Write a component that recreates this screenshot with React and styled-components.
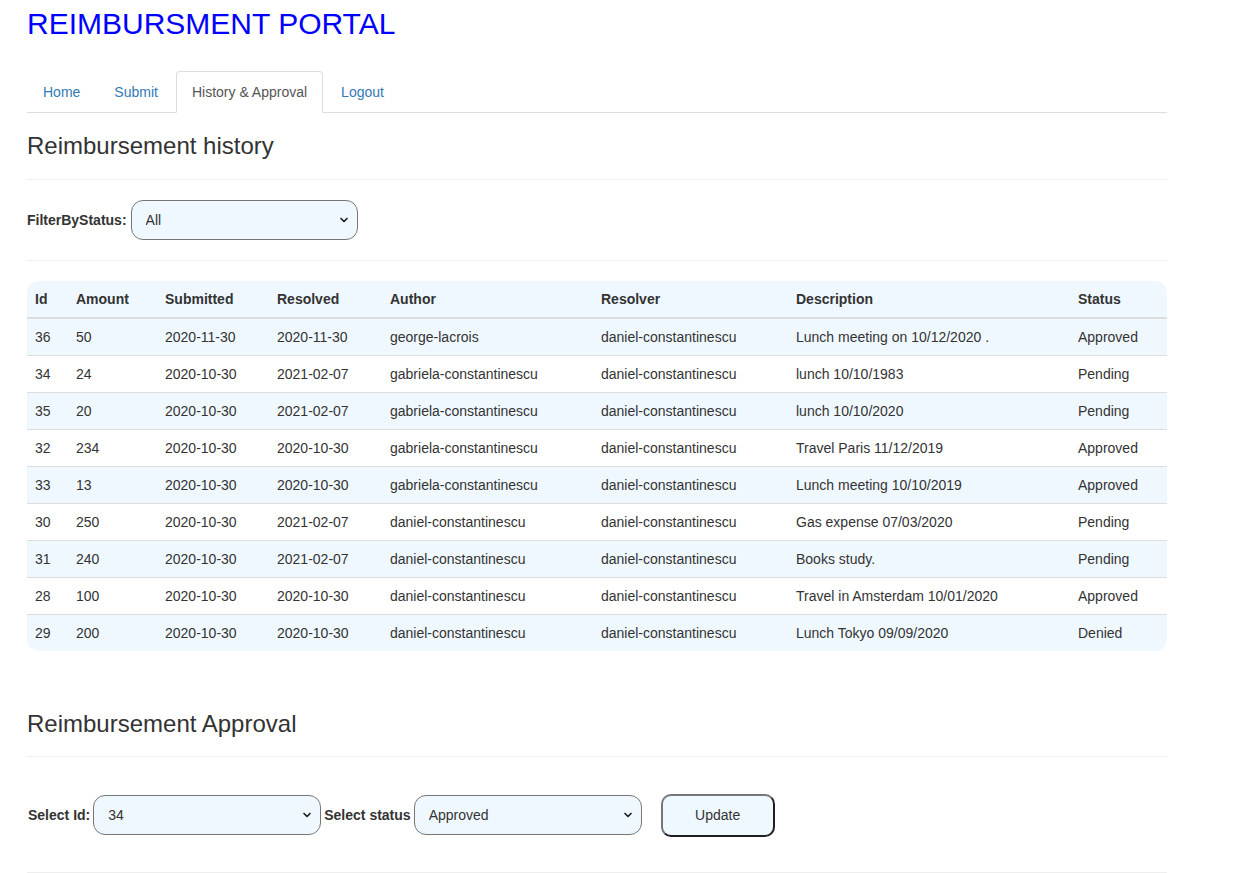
import React, { useState } from "react";
import styled, { createGlobalStyle } from "styled-components";
import { ChevronDown } from "lucide-react";

const GlobalStyle = createGlobalStyle`
  body {
    margin: 0;
    background: #fff;
    font-family: "Liberation Sans", Arial, sans-serif;
    font-size: 14px;
    line-height: 20px;
    color: #333;
  }
`;

const Page = styled.div`
  width: 1140px;
  margin-left: 27px;
`;

const Title = styled.h1`
  margin: 6px 0 0;
  font-size: 30px;
  line-height: 36px;
  font-weight: 400;
  color: #0000ff;
`;

const Tabs = styled.ul`
  display: flex;
  list-style: none;
  margin: 29px 0 0;
  padding: 0;
  border-bottom: 1px solid #ddd;
`;

const Tab = styled.li`
  margin-bottom: -1px;
  margin-right: 2px;
  padding: 10px 15px;
  line-height: 20px;
  border: 1px solid ${(p) => (p.$active ? "#ddd" : "transparent")};
  border-bottom-color: transparent;
  border-radius: 4px 4px 0 0;
  background: ${(p) => (p.$active ? "#fff" : "transparent")};
  color: ${(p) => (p.$active ? "#555" : "#337ab7")};
  cursor: pointer;
`;

const Heading = styled.h3`
  margin: ${(p) => p.$top || 20}px 0 0;
  font-size: 24px;
  line-height: 26.4px;
  font-weight: 400;
  color: #333;
`;

const Rule = styled.hr`
  margin: ${(p) => p.$top || 20}px 0 20px;
  border: 0;
  border-top: 1px solid #eee;
`;

const FormRow = styled.div`
  display: flex;
  align-items: center;
  gap: ${(p) => p.$gap || 4}px;
  margin-top: ${(p) => p.$top || 0}px;
`;

const Label = styled.label`
  font-weight: 700;
  font-size: 14px;
  margin-left: ${(p) => p.$left || 0}px;
`;

const SelectWrap = styled.div`
  position: relative;
  width: ${(p) => p.$width}px;
`;

const Select = styled.select`
  appearance: none;
  width: 100%;
  height: 40px;
  padding: 0 30px 0 14px;
  border: 1px solid #767676;
  border-radius: 12px;
  background: #f0f8ff;
  font-family: "Liberation Sans", Arial, sans-serif;
  font-size: 14px;
  color: #333;
  outline: none;
`;

const Arrow = styled(ChevronDown)`
  position: absolute;
  right: 8px;
  top: 14px;
  pointer-events: none;
  color: #222;
`;

const UpdateButton = styled.button`
  margin-left: 16px;
  width: 114px;
  height: 43px;
  border: 2px solid;
  border-color: #767676 #1f1f1f #1f1f1f #767676;
  border-radius: 10px;
  background: #f0f8ff;
  font-family: "Liberation Sans", Arial, sans-serif;
  font-size: 14px;
  color: #333;
  cursor: pointer;
`;

const TableWrap = styled.div`
  border-radius: 12px;
  overflow: hidden;
`;

const Table = styled.table`
  width: 100%;
  border-collapse: collapse;
  table-layout: fixed;
`;

const Th = styled.th`
  box-sizing: border-box;
  text-align: left;
  padding: 8px;
  line-height: 20px;
  font-weight: 700;
  border-bottom: 2px solid #ddd;
  background: #f0f8ff;
  width: ${(p) => p.$w}px;
`;

const Row = styled.tr`
  background: ${(p) => (p.$striped ? "#f0f8ff" : "#fff")};
`;

const Td = styled.td`
  padding: 8px;
  line-height: 20px;
  border-top: 1px solid #ddd;
  white-space: nowrap;
`;

const columns = [
  ["Id", 41],
  ["Amount", 89],
  ["Submitted", 112],
  ["Resolved", 113],
  ["Author", 211],
  ["Resolver", 195],
  ["Description", 282],
  ["Status", 97],
];

const rows = [
  [36, 50, "2020-11-30", "2020-11-30", "george-lacrois", "daniel-constantinescu", "Lunch meeting on 10/12/2020 .", "Approved"],
  [34, 24, "2020-10-30", "2021-02-07", "gabriela-constantinescu", "daniel-constantinescu", "lunch 10/10/1983", "Pending"],
  [35, 20, "2020-10-30", "2021-02-07", "gabriela-constantinescu", "daniel-constantinescu", "lunch 10/10/2020", "Pending"],
  [32, 234, "2020-10-30", "2020-10-30", "gabriela-constantinescu", "daniel-constantinescu", "Travel Paris 11/12/2019", "Approved"],
  [33, 13, "2020-10-30", "2020-10-30", "gabriela-constantinescu", "daniel-constantinescu", "Lunch meeting 10/10/2019", "Approved"],
  [30, 250, "2020-10-30", "2021-02-07", "daniel-constantinescu", "daniel-constantinescu", "Gas expense 07/03/2020", "Pending"],
  [31, 240, "2020-10-30", "2021-02-07", "daniel-constantinescu", "daniel-constantinescu", "Books study.", "Pending"],
  [28, 100, "2020-10-30", "2020-10-30", "daniel-constantinescu", "daniel-constantinescu", "Travel in Amsterdam 10/01/2020", "Approved"],
  [29, 200, "2020-10-30", "2020-10-30", "daniel-constantinescu", "daniel-constantinescu", "Lunch Tokyo 09/09/2020", "Denied"],
];

function Dropdown({ width, value, onChange, options }) {
  return (
    <SelectWrap $width={width}>
      <Select value={value} onChange={(e) => onChange(e.target.value)}>
        {options.map((o) => (
          <option key={o} value={o}>
            {o}
          </option>
        ))}
      </Select>
      <Arrow size={12} strokeWidth={3.4} />
    </SelectWrap>
  );
}

export default function App() {
  const [filter, setFilter] = useState("All");
  const [selectedId, setSelectedId] = useState("34");
  const [status, setStatus] = useState("Approved");

  const shown = filter === "All" ? rows : rows.filter((r) => r[7] === filter);

  return (
    <Page>
      <GlobalStyle />
      <Title>REIMBURSMENT PORTAL</Title>
      <Tabs>
        <Tab>Home</Tab>
        <Tab>Submit</Tab>
        <Tab $active>History &amp; Approval</Tab>
        <Tab>Logout</Tab>
      </Tabs>

      <Heading>Reimbursement history</Heading>
      <Rule />
      <FormRow>
        <Label>FilterByStatus:</Label>
        <Dropdown width={227} value={filter} onChange={setFilter} options={["All", "Pending", "Approved", "Denied"]} />
      </FormRow>
      <Rule />
      <TableWrap>
        <Table>
          <thead>
            <tr>
              {columns.map(([name, w]) => (
                <Th key={name} $w={w}>
                  {name}
                </Th>
              ))}
            </tr>
          </thead>
          <tbody>
            {shown.map((r, i) => (
              <Row key={r[0]} $striped={i % 2 === 0}>
                {r.map((c, j) => (
                  <Td key={j}>{c}</Td>
                ))}
              </Row>
            ))}
          </tbody>
        </Table>
      </TableWrap>

      <Heading $top={60}>Reimbursement Approval</Heading>
      <Rule $top={18} />
      <FormRow $top={37} $gap={3}>
        <Label $left={1}>Select Id:</Label>
        <Dropdown width={228} value={selectedId} onChange={setSelectedId} options={rows.map((r) => String(r[0]))} />
        <Label>Select status</Label>
        <Dropdown width={228} value={status} onChange={setStatus} options={["Approved", "Denied", "Pending"]} />
        <UpdateButton>Update</UpdateButton>
      </FormRow>
      <Rule $top={35} />
    </Page>
  );
}
